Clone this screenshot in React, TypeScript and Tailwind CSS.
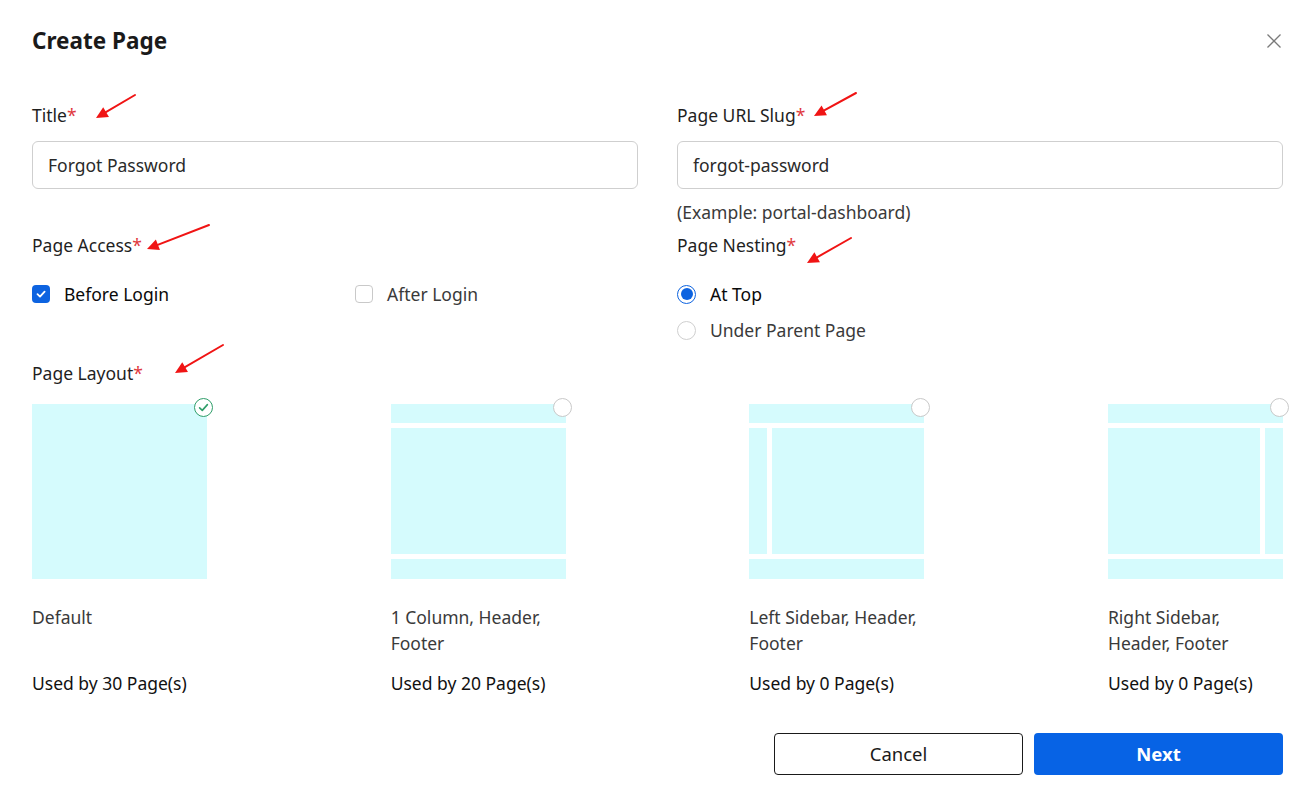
import React from "react";

const font = { fontFamily: '"Noto Sans", "Open Sans", "Liberation Sans", sans-serif' };

function Label({ text }: { text: string }) {
  return (
    <div className="text-[17.5px] leading-[24px] text-[#1f1f1f]">
      {text}
      <span className="text-[#e0393e]">*</span>
    </div>
  );
}

function Checkbox({ checked }: { checked: boolean }) {
  if (checked) {
    return (
      <span className="flex h-[18px] w-[18px] items-center justify-center rounded-[4px] bg-[#0d63e0]">
        <svg width="12" height="12" viewBox="0 0 12 12" fill="none">
          <path d="M2.5 6.2 L5 8.6 L9.6 3.6" stroke="white" strokeWidth="1.8" strokeLinecap="round" strokeLinejoin="round" />
        </svg>
      </span>
    );
  }
  return <span className="block h-[18px] w-[18px] rounded-[4px] border border-[#c9c9c9] bg-white" />;
}

function Radio({ checked }: { checked: boolean }) {
  if (checked) {
    return (
      <span className="flex h-[19px] w-[19px] items-center justify-center rounded-full border-[1.5px] border-[#0d63e0] bg-white">
        <span className="block h-[12px] w-[12px] rounded-full bg-[#0d63e0]" />
      </span>
    );
  }
  return <span className="block h-[19px] w-[19px] rounded-full border border-[#cfcfcf] bg-white" />;
}

const CYAN = "bg-[#d5fbfd]";

function LayoutPreview({ kind }: { kind: number }) {
  if (kind === 0) {
    return <div className={`h-[175px] w-[175px] ${CYAN}`} />;
  }
  return (
    <div className="flex h-[175px] w-[175px] flex-col gap-[5px]">
      <div className={`h-[19px] ${CYAN}`} />
      <div className="flex h-[126px] gap-[5px]">
        {kind === 2 && <div className={`w-[18px] ${CYAN}`} />}
        <div className={`flex-1 ${CYAN}`} />
        {kind === 3 && <div className={`w-[18px] ${CYAN}`} />}
      </div>
      <div className={`h-[20px] ${CYAN}`} />
    </div>
  );
}

function LayoutCard({ kind, name, used, selected }: { kind: number; name: string; used: string; selected: boolean }) {
  return (
    <div className="w-[175px]">
      <div className="relative h-[175px] w-[175px]">
        <LayoutPreview kind={kind} />
        <span className="absolute -right-[6px] -top-[6px]">
          {selected ? (
            <span className="flex h-[19px] w-[19px] items-center justify-center rounded-full border border-[#2f9e6a] bg-white">
              <svg width="13" height="13" viewBox="0 0 13 13" fill="none">
                <path d="M2.6 6.8 L5.3 9.4 L10.4 3.6" stroke="#2f9e6a" strokeWidth="1.6" strokeLinecap="round" strokeLinejoin="round" />
              </svg>
            </span>
          ) : (
            <span className="block h-[19px] w-[19px] rounded-full border border-[#c9c9c9] bg-white" />
          )}
        </span>
      </div>
      <div className="mt-[25px] h-[52px] text-[17.5px] leading-[26px] text-[#3a3a3a]">{name}</div>
      <div className="mt-[14px] text-[17.5px] leading-[26px] text-[#111]">{used}</div>
    </div>
  );
}

function Arrows() {
  const arrows = [
    [135, 95, 96, 118],
    [856, 93, 814, 116],
    [209, 225, 147, 249],
    [851, 238, 807, 263],
    [223, 345, 175, 373],
  ];
  return (
    <svg className="pointer-events-none absolute left-0 top-0" width="1311" height="797" viewBox="0 0 1311 797">
      {arrows.map(([x1, y1, x2, y2], i) => {
        const ang = Math.atan2(y2 - y1, x2 - x1);
        const len = 13;
        const spread = 0.45;
        const ax = x2 - len * Math.cos(ang - spread);
        const ay = y2 - len * Math.sin(ang - spread);
        const bx = x2 - len * Math.cos(ang + spread);
        const by = y2 - len * Math.sin(ang + spread);
        const mx = x2 - 8 * Math.cos(ang);
        const my = y2 - 8 * Math.sin(ang);
        return (
          <g key={i}>
            <line x1={x1} y1={y1} x2={mx} y2={my} stroke="#f01414" strokeWidth="2" strokeLinecap="round" />
            <polygon points={`${x2},${y2} ${ax},${ay} ${bx},${by}`} fill="#f01414" />
          </g>
        );
      })}
    </svg>
  );
}

export default function App() {
  return (
    <div className="relative h-[797px] w-[1311px] overflow-hidden bg-white" style={font}>
      <div className="pl-[32px] pr-[28px] pt-[25px]">
        <div className="flex h-[32px] items-center justify-between">
          <div className="text-[22.5px] font-bold leading-[32px] text-[#1a1a1a]">Create Page</div>
          <svg width="16" height="16" viewBox="0 0 16 16" className="mr-[1px]">
            <path d="M1.5 1.5 L14.5 14.5 M14.5 1.5 L1.5 14.5" stroke="#7a7a7a" strokeWidth="1.3" />
          </svg>
        </div>

        <div className="mt-[46px] grid grid-cols-2 gap-x-[39px]">
          <div>
            <Label text="Title" />
            <div className="mt-[14px] flex h-[48px] items-center rounded-[6px] border border-[#cfcfcf] px-[15px] text-[17.5px] text-[#2a2a2a]">
              Forgot Password
            </div>
          </div>
          <div>
            <Label text="Page URL Slug" />
            <div className="mt-[14px] flex h-[48px] items-center rounded-[6px] border border-[#cfcfcf] px-[15px] text-[17.5px] text-[#2a2a2a]">
              forgot-password
            </div>
            <div className="mt-[11px] text-[17.5px] leading-[24px] text-[#3a3a3a]">(Example: portal-dashboard)</div>
          </div>
        </div>

        <div className="mt-[9px] grid grid-cols-2 gap-x-[39px]">
          <div>
            <Label text="Page Access" />
            <div className="mt-[25px] grid grid-cols-2 gap-x-[40px]">
              <div className="flex items-center gap-[14px]">
                <Checkbox checked />
                <span className="text-[17.5px] leading-[24px] text-[#0a0a0a]">Before Login</span>
              </div>
              <div className="flex items-center gap-[14px]">
                <Checkbox checked={false} />
                <span className="text-[17.5px] leading-[24px] text-[#3a3a3a]">After Login</span>
              </div>
            </div>
          </div>
          <div>
            <Label text="Page Nesting" />
            <div className="mt-[25px] flex flex-col gap-[12px]">
              <div className="flex items-center gap-[14px]">
                <Radio checked />
                <span className="text-[17.5px] leading-[24px] text-[#0a0a0a]">At Top</span>
              </div>
              <div className="flex items-center gap-[14px]">
                <Radio checked={false} />
                <span className="text-[17.5px] leading-[24px] text-[#3a3a3a]">Under Parent Page</span>
              </div>
            </div>
          </div>
        </div>

        <div className="mt-[19px]">
          <Label text="Page Layout" />
          <div className="mt-[19px] flex justify-between">
            <LayoutCard kind={0} name="Default" used="Used by 30 Page(s)" selected />
            <LayoutCard kind={1} name="1 Column, Header, Footer" used="Used by 20 Page(s)" selected={false} />
            <LayoutCard kind={2} name="Left Sidebar, Header, Footer" used="Used by 0 Page(s)" selected={false} />
            <LayoutCard kind={3} name="Right Sidebar, Header, Footer" used="Used by 0 Page(s)" selected={false} />
          </div>
        </div>

        <div className="mt-[37px] flex justify-end gap-[11px]">
          <button className="h-[42px] w-[249px] rounded-[4px] border border-[#1a1a1a] bg-white text-[18.5px] text-[#1a1a1a]">
            Cancel
          </button>
          <button className="h-[42px] w-[249px] rounded-[4px] bg-[#0763e5] text-[18.5px] font-bold text-white">
            Next
          </button>
        </div>
      </div>
      <Arrows />
    </div>
  );
}
